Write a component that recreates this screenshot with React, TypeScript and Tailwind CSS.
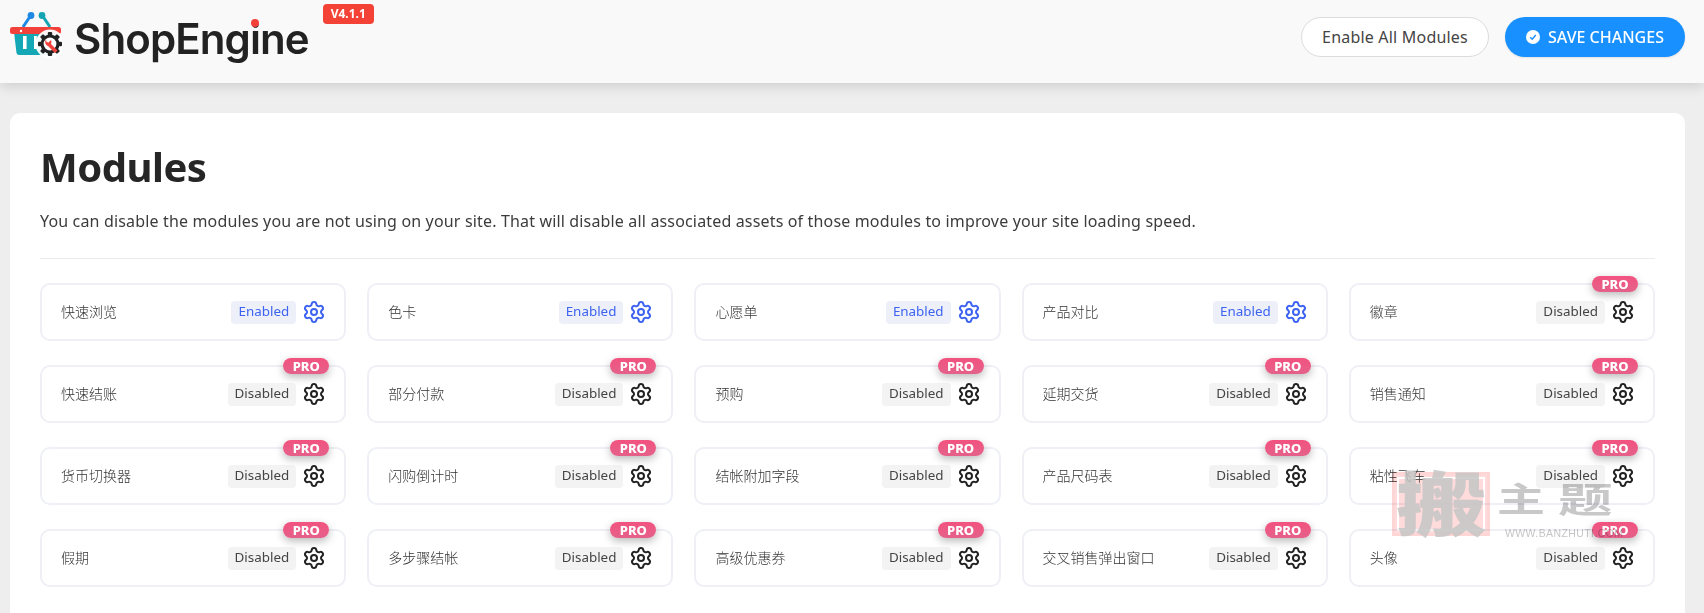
import { Settings } from "lucide-react";

type Mod = { name: string; on?: boolean; pro?: boolean };

const modules: Mod[] = [
  { name: "快速浏览", on: true },
  { name: "色卡", on: true },
  { name: "心愿单", on: true },
  { name: "产品对比", on: true },
  { name: "徽章", pro: true },
  { name: "快速结账", pro: true },
  { name: "部分付款", pro: true },
  { name: "预购", pro: true },
  { name: "延期交货", pro: true },
  { name: "销售通知", pro: true },
  { name: "货币切换器", pro: true },
  { name: "闪购倒计时", pro: true },
  { name: "结帐附加字段", pro: true },
  { name: "产品尺码表", pro: true },
  { name: "粘性飞车", pro: true },
  { name: "假期", pro: true },
  { name: "多步骤结帐", pro: true },
  { name: "高级优惠券", pro: true },
  { name: "交叉销售弹出窗口", pro: true },
  { name: "头像", pro: true },
];

function LogoIcon() {
  return (
    <svg width="52" height="46" viewBox="0 0 52 46" className="shrink-0">
      <path d="M13 15 L21 3" stroke="#1e88e5" strokeWidth="3" />
      <circle cx="21" cy="3.5" r="3.4" fill="#1e88e5" />
      <path d="M40 15 L32 3" stroke="#14a5b4" strokeWidth="3" />
      <circle cx="32" cy="3.5" r="3.4" fill="#14a5b4" />
      <path d="M4 20 H47 L42 43 H9 Q7 43 6.5 41 Z" fill="#14a8b6" />
      <rect x="0" y="15" width="51" height="7" rx="2.5" fill="#f2403a" />
      <circle cx="11" cy="19" r="1.2" fill="#fff" />
      <rect x="13" y="24" width="3.6" height="13" fill="#fff" />
      <rect x="24" y="24" width="2.8" height="13" fill="#fff" />
      <circle cx="40" cy="32" r="14.5" fill="#fff" fillOpacity="0.95" />
      <g fill="#222">
        <circle cx="40" cy="32" r="9.5" />
        <rect x="37.8" y="20" width="4.4" height="24" rx="1" />
        <rect x="37.8" y="20" width="4.4" height="24" rx="1" transform="rotate(45 40 32)" />
        <rect x="37.8" y="20" width="4.4" height="24" rx="1" transform="rotate(90 40 32)" />
        <rect x="37.8" y="20" width="4.4" height="24" rx="1" transform="rotate(135 40 32)" />
      </g>
      <circle cx="40" cy="32" r="6.4" fill="#fff" />
      <path d="M36 27.5 A4.2 4.2 0 0 0 38 34 L45 41 L47.5 38.5 L41 32 A4.2 4.2 0 0 0 41 28 L38.5 30.5 L36.5 30 Z" fill="#f2403a" />
    </svg>
  );
}

function Card({ m }: { m: Mod }) {
  return (
    <div className="relative flex h-[58px] items-center justify-between rounded-[10px] border-2 border-[#eff0f6] bg-white pl-[19px] pr-[18px]">
      <span className="-mt-[1px] text-[14px] font-light text-[#333]">{m.name}</span>
      <div className="flex items-center gap-[6px]">
        <span
          className={
            m.on
              ? "flex h-[23px] items-center rounded-[4px] bg-[#edf0f9] px-[7px] text-[13.4px] leading-none text-[#3d63f0]"
              : "flex h-[23px] items-center rounded-[4px] bg-[#f3f3f3] px-[7px] text-[13.4px] leading-none text-[#444]"
          }
        >
          {m.on ? "Enabled" : "Disabled"}
        </span>
        <Settings
          size={24}
          strokeWidth={2}
          className={m.on ? "text-[#3d63f0]" : "text-[#222]"}
        />
      </div>
      {m.pro && (
        <span className="absolute -top-[9px] right-[15px] flex h-[16px] w-[46px] items-center justify-center rounded-full bg-gradient-to-b from-[#f2527f] to-[#e4618a] text-[13px] font-extrabold leading-none text-white shadow-[0_3px_8px_rgba(0,0,0,0.28)]">
          PRO
        </span>
      )}
    </div>
  );
}

export default function App() {
  return (
    <div className="relative h-[613px] w-[1704px] overflow-hidden bg-[#eeeeee] font-['Noto_Sans','Noto_Sans_CJK_SC',sans-serif]">
      <header className="relative z-10 flex h-[83px] items-start justify-between bg-[#f9f9f9] pl-[10px] pr-[19px] pt-[17px] shadow-[0_3px_12px_rgba(0,0,0,0.14)]">
        <div className="relative -mt-[5px] flex items-start">
          <LogoIcon />
          <span className="ml-[12px] mt-[1px] font-['Inter',sans-serif] text-[42px] font-semibold leading-[52px] tracking-[-0.9px] text-[#222]">
            ShopEngine
          </span>
          <span className="absolute left-[241px] top-[7px] h-[8px] w-[8px] rounded-full bg-[#f2403a]" />
          <span className="ml-[14px] -mt-[8px] flex h-[20px] w-[51px] items-center justify-center rounded-[4px] bg-[#f44336] text-[12px] font-bold leading-none text-white">
            V4.1.1
          </span>
        </div>
        <div className="flex items-center gap-[16px]">
          <button className="h-[40px] w-[188px] rounded-full border border-[#dcdcdc] bg-white text-[16px] tracking-[0.2px] text-[#444]">
            Enable All Modules
          </button>
          <button className="flex h-[40px] w-[180px] items-center justify-center gap-[8px] rounded-full bg-[#1890ff] text-[16px] font-medium text-white shadow-[0_1px_2px_rgba(0,0,0,0.1)]">
            <svg width="14" height="14" viewBox="0 0 14 14">
              <circle cx="7" cy="7" r="7" fill="#fff" />
              <path d="M4.2 7.2 L6.2 9.2 L9.8 5" fill="none" stroke="#1890ff" strokeWidth="1.4" />
            </svg>
            SAVE CHANGES
          </button>
        </div>
      </header>

      <main className="ml-[10px] mr-[19px] mt-[30px] h-[520px] rounded-t-[10px] bg-white px-[30px] pt-[29px]">
        <h1 className="text-[40px] font-bold leading-[50px] tracking-[-0.5px] text-[#262626]">Modules</h1>
        <p className="mt-[16px] text-[16px] leading-[26px] tracking-[0.16px] text-[#3c3c3c]">
          You can disable the modules you are not using on your site. That will disable all associated assets of those modules to improve your site loading speed.
        </p>
        <div className="mt-[24px] h-px bg-[#ececec]" />
        <div className="mt-[24px] grid grid-cols-5 gap-x-[21px] gap-y-[24px]">
          {modules.map((m) => (
            <Card key={m.name} m={m} />
          ))}
        </div>
      </main>

      <div className="pointer-events-none absolute left-[1392px] top-[472px] h-[64px] w-[98px] border-[3px] border-[#ffd6d6] bg-[#ffcccc]/70 mix-blend-multiply outline outline-2 -outline-offset-[7px] outline-white" />
      <span className="pointer-events-none absolute left-[1396px] top-[462px] origin-left scale-x-[1.3] text-[70px] font-black leading-[84px] text-[#c6c6c6]/85">
        搬
      </span>
      <span className="pointer-events-none absolute left-[1497px] top-[473px] origin-left scale-x-[1.2] scale-y-[0.85] text-[40px] font-bold leading-[52px] text-[#c8c8c8] mix-blend-multiply">
        主
      </span>
      <span className="pointer-events-none absolute left-[1558px] top-[473px] origin-left scale-x-[1.3] scale-y-[0.85] text-[42px] font-bold leading-[52px] text-[#c8c8c8] mix-blend-multiply">
        题
      </span>
      <span className="pointer-events-none absolute left-[1505px] top-[526px] font-['Liberation_Sans',sans-serif] text-[10.5px] leading-[14px] tracking-[0.4px] text-[#c6c6c6] mix-blend-multiply">
        WWW.BANZHUTI.COM
      </span>
    </div>
  );
}
